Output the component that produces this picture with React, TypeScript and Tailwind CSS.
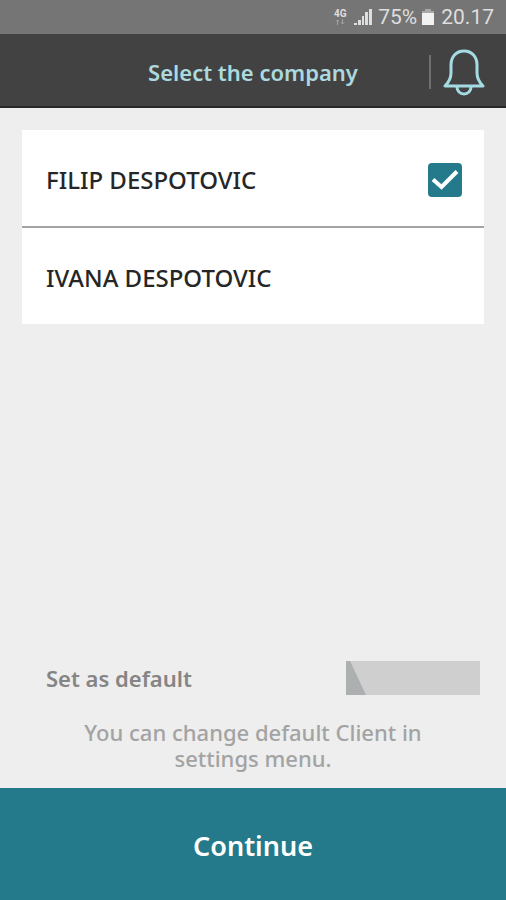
import React, { useState } from 'react';

const companies = ['FILIP DESPOTOVIC', 'IVANA DESPOTOVIC'];

const StatusBar: React.FC = () => {
  return (
    <div className="flex h-[34px] items-center justify-end bg-[#757575] pr-3 font-['Roboto',sans-serif] text-[21px] leading-6 text-[#dedede]">
      <div className="mr-1.5 flex w-4 flex-col items-center">
        <span className="text-[10px] leading-[10px] font-bold">4G</span>
        <svg width="10" height="6" viewBox="0 0 10 6" fill="none" stroke="#a5a5a5" aria-hidden="true">
          <path d="M2.5 6V1M1 2.5 2.5 1 4 2.5M7.5 0v5M6 3.5 7.5 5 9 3.5" />
        </svg>
      </div>
      <svg className="mr-1.5" width="18" height="18" viewBox="0 0 18 18" fill="#dedede" aria-hidden="true">
        <path d="M0 15h3v2H0zM4 12h3v5H4zM8 8h2v9H8zM11 4h3v13h-3zM15 1h3v16h-3z" />
      </svg>
      <span>75%</span>
      <svg className="mx-1" width="14" height="18" viewBox="0 0 14 18" aria-hidden="true">
        <path d="M4 1h6v2h3v14H1V3h3z" fill="#f2f2f2" />
        <path d="M4 1h6v2h3v2H1V3h3z" fill="#a8a8a8" />
      </svg>
      <span className="ml-0.5">20.17</span>
    </div>
  );
};

const Header: React.FC = () => {
  return (
    <header className="grid h-[74px] grid-cols-[80px_1fr_80px] items-center border-b-2 border-[#292929] bg-[#424242] pt-1">
      <h1 className="col-start-2 text-center text-[22px] leading-7 font-semibold whitespace-nowrap text-[#acd9df]">
        Select the company
      </h1>
      <div className="flex items-center gap-3 pl-[3px]">
        <span className="h-[34px] w-0.5 bg-[#6f6f6f]" />
        <button type="button" aria-label="Notifications">
          <svg
            width="42"
            height="48"
            viewBox="0 0 42 48"
            fill="none"
            stroke="#a5dce3"
            strokeWidth="3"
            strokeLinejoin="round"
          >
            <path d="M21 3C13 3 8 9 8 17v8c0 6-2 9-6 13h38c-4-4-6-7-6-13v-8C34 9 29 3 21 3Z" />
            <path d="M14 39c0 4 3 7 7 7s7-3 7-7" />
          </svg>
        </button>
      </div>
    </header>
  );
};

const App: React.FC = () => {
  const [selected, setSelected] = useState(0);
  const [isDefault, setIsDefault] = useState(false);

  return (
    <div className="flex min-h-screen flex-col bg-[#eeeeee] font-['Noto_Sans',sans-serif]">
      <StatusBar />
      <Header />

      <main className="flex flex-1 flex-col justify-between px-[22px] pt-[22px] pb-[17px]">
        <ul className="divide-y-2 divide-[#a3a3a3] bg-white">
          {companies.map((name, index) => (
            <li key={name}>
              <label className="flex h-24 items-center justify-between pt-1 pr-[22px] pl-6 text-[24px] leading-8 font-medium text-[#262626]">
                <span>{name}</span>
                <span className="grid size-[34px] place-items-center">
                  <input
                    type="checkbox"
                    checked={selected === index}
                    onChange={() => setSelected(index)}
                    className="col-start-1 row-start-1 size-[34px] appearance-none rounded-sm checked:bg-[#247a8a]"
                  />
                  {selected === index && (
                    <svg
                      className="pointer-events-none col-start-1 row-start-1"
                      width="34"
                      height="34"
                      viewBox="0 0 34 34"
                      fill="none"
                      stroke="white"
                      strokeWidth="4"
                      aria-hidden="true"
                    >
                      <path d="M5 16.5 13.5 24 29 8.5" />
                    </svg>
                  )}
                </span>
              </label>
            </li>
          ))}
        </ul>

        <div>
          <label className="flex items-center justify-between pr-1 pl-6 text-[22px] leading-8 font-semibold text-[#858585]">
            <span>Set as default</span>
            <span className="grid h-[34px] w-[134px]">
              <input
                type="checkbox"
                role="switch"
                checked={isDefault}
                onChange={() => setIsDefault(!isDefault)}
                className="col-start-1 row-start-1 h-full w-full appearance-none bg-[#cfcfcf] checked:bg-[#247a8a]"
              />
              <svg
                className="pointer-events-none col-start-1 row-start-1"
                width="20"
                height="34"
                viewBox="0 0 20 34"
                fill="#adb0b0"
                aria-hidden="true"
              >
                <path d="M0 0h4l16 34H0z" />
              </svg>
            </span>
          </label>
          <p className="mx-auto mt-6 max-w-[360px] text-center text-[22px] leading-[26px] font-medium text-[#a3a3a3]">
            You can change default Client in settings menu.
          </p>
        </div>
      </main>

      <button type="button" className="h-28 bg-[#247a8a] pt-1 text-[27px] leading-9 font-semibold text-white">
        Continue
      </button>
    </div>
  );
};

export default App;
